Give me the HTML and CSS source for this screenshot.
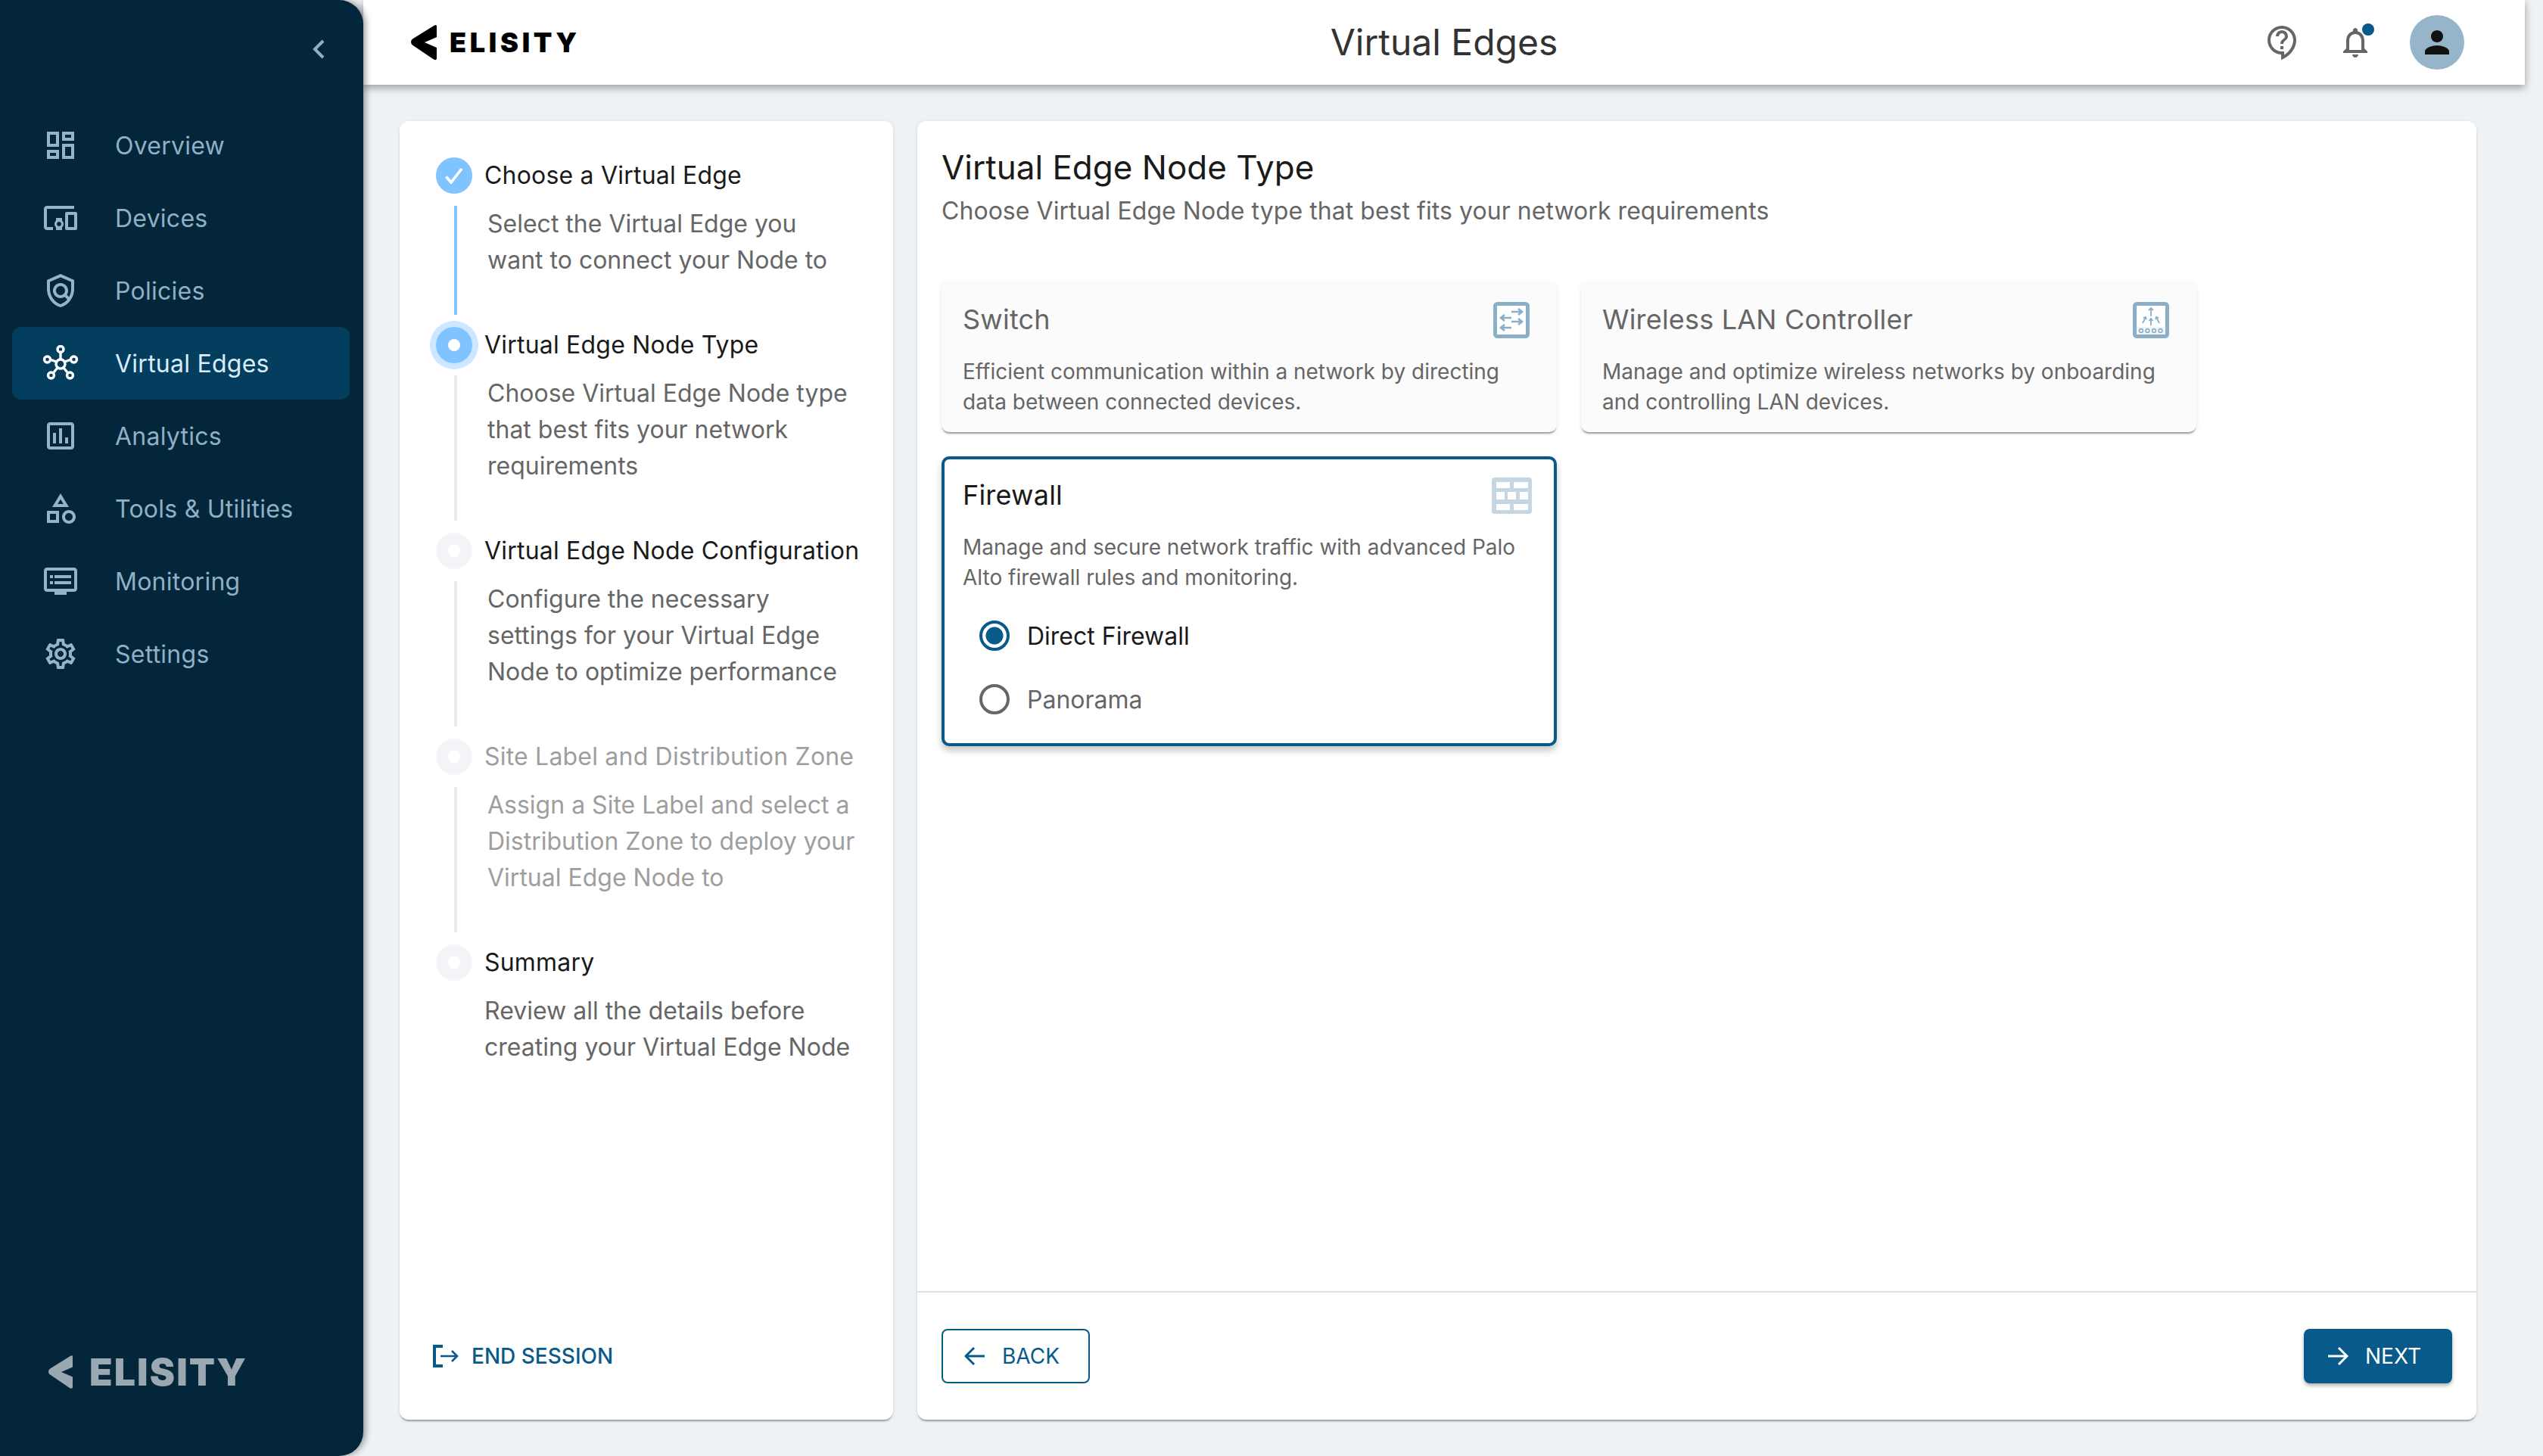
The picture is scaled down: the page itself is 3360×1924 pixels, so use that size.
FILE: index.html
```html
<!DOCTYPE html>
<html lang="en">
<head>
<meta charset="utf-8">
<title>Virtual Edges</title>
<link rel="stylesheet" href="styles.css">
</head>
<body>
<div class="app">
  <aside class="sidebar">
    <div class="collapse">
      <svg class="chevron" viewBox="0 0 18 26"><path d="M15 2 4 13l11 11"/></svg>
    </div>
    <nav class="nav">
      <a class="nav-item"><svg class="ico" viewBox="0 0 24 24"><path d="M19 5v2h-4V5h4M9 5v6H5V5h4m10 8v6h-4v-6h4M9 17v2H5v-2h4M21 3h-8v6h8V3zM11 3H3v10h8V3zm10 8h-8v10h8V11zm-10 4H3v6h8v-6z"/></svg><span>Overview</span></a>
      <a class="nav-item"><svg class="ico" viewBox="0 0 24 24"><path d="M3 6h18V4H3c-1.1 0-2 .9-2 2v12c0 1.1.9 2 2 2h4v-2H3V6zm10 6H9v1.78c-.61.55-1 1.33-1 2.22s.39 1.67 1 2.22V20h4v-1.78c.61-.55 1-1.34 1-2.22s-.39-1.67-1-2.22V12zm-2 5.5c-.83 0-1.5-.67-1.5-1.5s.67-1.5 1.5-1.5 1.5.67 1.5 1.5-.67 1.5-1.5 1.5zM22 8h-6c-.5 0-1 .5-1 1v10c0 .5.5 1 1 1h6c.5 0 1-.5 1-1V9c0-.5-.5-1-1-1zm-1 10h-4v-8h4v8z"/></svg><span>Devices</span></a>
      <a class="nav-item"><svg class="ico" viewBox="0 0 24 24"><path d="M12 1 3 5v6c0 5.55 3.84 10.74 9 12 5.16-1.26 9-6.45 9-12V5l-9-4zm7 10c0 1.85-.51 3.65-1.38 5.21l-1.45-1.45c1.29-1.94 1.07-4.58-.64-6.29-1.95-1.95-5.12-1.95-7.07 0-1.95 1.95-1.95 5.12 0 7.07 1.71 1.71 4.35 1.92 6.29.64l1.72 1.72c-1.19 1.44-2.73 2.51-4.47 3.04C7.98 19.69 5 15.52 5 11V6.3l7-3.11 7 3.11V11zm-7 4c-1.66 0-3-1.34-3-3s1.34-3 3-3 3 1.34 3 3-1.34 3-3 3z"/></svg><span>Policies</span></a>
      <a class="nav-item active"><svg class="ico hub" viewBox="0 0 48 48"><path d="M24 18V10M18.500 22 10 19M29.500 22 38 19M20 30 15 36M28 30 33 36"/><circle cx="24" cy="25" r="6"/><circle cx="24" cy="5.500" r="4"/><circle cx="6.500" cy="19" r="4"/><circle cx="41.500" cy="19" r="4"/><circle cx="11.500" cy="40" r="4"/><circle cx="36.500" cy="40" r="4"/></svg><span>Virtual Edges</span></a>
      <a class="nav-item"><svg class="ico" viewBox="0 0 24 24"><path d="M19 3H5c-1.1 0-2 .9-2 2v14c0 1.1.9 2 2 2h14c1.1 0 2-.9 2-2V5c0-1.1-.9-2-2-2zm0 16H5V5h14v14zM7 10h2v7H7zm4-3h2v10h-2zm4 6h2v4h-2z"/></svg><span>Analytics</span></a>
      <a class="nav-item"><svg class="ico" viewBox="0 0 24 24"><path d="m12 2-5.500 9h11L12 2zm0 3.840L13.930 9h-3.870L12 5.840zM17.500 13c-2.490 0-4.500 2.010-4.500 4.500s2.010 4.500 4.500 4.500 4.500-2.010 4.500-4.500-2.010-4.500-4.500-4.500zm0 7c-1.380 0-2.500-1.120-2.500-2.500s1.120-2.500 2.500-2.500 2.500 1.120 2.500 2.500-1.120 2.500-2.500 2.500zM3 21.500h8v-8H3v8zm2-6h4v4H5v-4z"/></svg><span>Tools &amp; Utilities</span></a>
      <a class="nav-item"><svg class="ico" viewBox="0 0 24 24"><path d="M21 3H3c-1.100 0-2 .9-2 2v12c0 1.100.9 2 2 2h5v2h8v-2h5c1.100 0 1.990-.9 1.990-2L23 5c0-1.100-.9-2-2-2zm0 14H3V5h18v12zm-2-9H8v2h11V8zm0 4H8v2h11v-2zM7 8H5v2h2V8zm0 4H5v2h2v-2z"/></svg><span>Monitoring</span></a>
      <a class="nav-item"><svg class="ico" viewBox="0 0 24 24"><path d="M19.430 12.980c.04-.32.07-.64.07-.98 0-.34-.03-.66-.07-.98l2.110-1.650c.19-.15.24-.42.12-.64l-2-3.460c-.09-.16-.26-.25-.44-.25-.06 0-.12.01-.17.03l-2.490 1c-.52-.4-1.080-.73-1.690-.98l-.38-2.650C14.460 2.180 14.250 2 14 2h-4c-.25 0-.46.18-.49.42l-.38 2.650c-.61.25-1.170.59-1.690.98l-2.490-1c-.06-.02-.12-.03-.18-.03-.17 0-.34.09-.43.25l-2 3.460c-.13.22-.07.49.12.64l2.110 1.650c-.04.32-.07.65-.07.98 0 .33.03.66.07.98l-2.110 1.650c-.19.15-.24.42-.12.64l2 3.460c.09.16.26.25.44.25.06 0 .12-.01.17-.03l2.490-1c.52.4 1.080.73 1.690.98l.38 2.650c.03.24.24.42.49.42h4c.25 0 .46-.18.49-.42l.38-2.650c.61-.25 1.170-.59 1.690-.98l2.490 1c.06.02.12.03.18.03.17 0 .34-.09.43-.25l2-3.460c.12-.22.07-.49-.12-.64l-2.110-1.650zm-1.980-1.710c.04.31.05.52.05.73 0 .21-.02.43-.05.73l-.14 1.130.89.7 1.080.84-.7 1.210-1.270-.51-1.040-.42-.9.68c-.43.32-.84.56-1.250.73l-1.060.43-.16 1.130-.2 1.350h-1.400l-.19-1.350-.16-1.130-1.060-.43c-.43-.18-.83-.41-1.230-.71l-.91-.7-1.060.43-1.270.51-.7-1.210 1.080-.84.89-.7-.14-1.130c-.03-.31-.05-.54-.05-.74s.02-.43.05-.73l.14-1.130-.89-.7-1.080-.84.7-1.210 1.270.51 1.040.42.9-.68c.43-.32.84-.56 1.250-.73l1.060-.43.16-1.130.2-1.350h1.390l.19 1.350.16 1.130 1.060.43c.43.18.83.41 1.230.71l.91.7 1.060-.43 1.270-.51.7 1.210-1.070.85-.89.7.14 1.130zM12 8c-2.210 0-4 1.790-4 4s1.790 4 4 4 4-1.790 4-4-1.790-4-4-4zm0 6c-1.100 0-2-.9-2-2s.9-2 2-2 2 .9 2 2-.9 2-2 2z"/></svg><span>Settings</span></a>
    </nav>
    <div class="side-brand">
      <svg class="side-mark" viewBox="0 0 34 48"><path d="M34 2.500Q34 0 31 1.500L2 19.500Q0 21 0 23.500 0 26 2 27.500L30 46.500Q34 48.500 34 45V31L18 24 34 17Z"/></svg>
      <span class="side-word">ELISITY</span>
    </div>
  </aside>

  <div class="main">
    <header class="topbar">
      <div class="top-left">
        <svg class="top-mark" viewBox="0 0 34 48"><path d="M34 2.500Q34 0 31 1.500L2 19.500Q0 21 0 23.500 0 26 2 27.500L30 46.500Q34 48.500 34 45V31L18 24 34 17Z"/></svg>
        <span class="top-word">ELISITY</span>
      </div>
      <h1 class="page-title">Virtual Edges</h1>
      <div class="top-right">
        <svg class="top-ico" viewBox="0 0 24 24"><path d="M11 23.590v-3.600c-5.010-.26-9-4.420-9-9.490C2 5.260 6.260 1 11.500 1S21 5.260 21 10.500c0 4.950-3.440 9.930-8.570 12.400l-1.430.69zM11.500 3C7.360 3 4 6.360 4 10.500S7.360 18 11.500 18H13v2.300c3.640-2.300 6-6.080 6-9.800C19 6.360 15.640 3 11.500 3zm-1 11.500h2v2h-2zm2-1.500h-2c0-3.250 3-3 3-5 0-1.100-.9-2-2-2s-2 .9-2 2h-2c0-2.210 1.790-4 4-4s4 1.790 4 4c0 2.500-3 2.750-3 5z"/></svg>
        <div class="bell">
          <svg class="top-ico" viewBox="0 0 24 24"><path d="M12 22c1.100 0 2-.9 2-2h-4c0 1.100.9 2 2 2zm6-6v-5c0-3.070-1.630-5.640-4.500-6.320V4c0-.83-.67-1.500-1.500-1.500s-1.500.67-1.500 1.500v.68C7.640 5.360 6 7.920 6 11v5l-2 2v1h16v-1l-2-2zm-2 1H8v-6c0-2.480 1.510-4.500 4-4.500s4 2.020 4 4.500v6z"/></svg>
          <span class="bell-dot"></span>
        </div>
        <div class="avatar"><svg class="avatar-ico" viewBox="0 0 24 24"><path d="M12 12c2.210 0 4-1.790 4-4s-1.790-4-4-4-4 1.790-4 4 1.790 4 4 4zm0 2c-2.670 0-8 1.340-8 4v2h16v-2c0-2.660-5.330-4-8-4z"/></svg></div>
      </div>
    </header>

    <div class="content">
      <section class="panel steps-panel">
        <ol class="steps">
          <li class="step">
            <div class="step-head"><span class="dot done"><svg class="check" viewBox="0 0 24 22"><path d="M1.500 12.500 8 20 22 2"/></svg></span><span class="step-title">Choose a Virtual Edge</span></div>
            <p class="step-body line-done">Select the Virtual Edge you want to connect your Node to</p>
          </li>
          <li class="step">
            <div class="step-head"><span class="dot current"><i></i></span><span class="step-title">Virtual Edge Node Type</span></div>
            <p class="step-body">Choose Virtual Edge Node type that best fits your network requirements</p>
          </li>
          <li class="step">
            <div class="step-head"><span class="dot"><i></i></span><span class="step-title">Virtual Edge Node Configuration</span></div>
            <p class="step-body">Configure the necessary settings for your Virtual Edge Node to optimize performance</p>
          </li>
          <li class="step muted">
            <div class="step-head"><span class="dot"><i></i></span><span class="step-title">Site Label and Distribution Zone</span></div>
            <p class="step-body">Assign a Site Label and select a Distribution Zone to deploy your Virtual Edge Node to</p>
          </li>
          <li class="step">
            <div class="step-head"><span class="dot"><i></i></span><span class="step-title">Summary</span></div>
            <p class="step-body last">Review all the details before creating your Virtual Edge Node</p>
          </li>
        </ol>
        <a class="end-session">
          <svg class="end-ico" viewBox="0 0 36 30"><path class="bracket" d="M14 2H3v26h11"/><path class="arrow-line" d="M11 15h22M26 8l7 7-7 7"/></svg>
          <span>END SESSION</span>
        </a>
      </section>

      <section class="panel node-panel">
        <div class="node-body">
          <h2 class="node-title">Virtual Edge Node Type</h2>
          <p class="node-sub">Choose Virtual Edge Node type that best fits your network requirements</p>
          <div class="cards">
            <article class="card">
              <div class="card-head"><h3>Switch</h3>
                <span class="card-ico"><svg class="ci-48" viewBox="0 0 48 48"><rect class="frame" x="2.500" y="2.500" width="43" height="43" rx="3"/><path class="arr" d="M24 13h14M33 9l5 4-5 4M24 21H10M15 17l-5 4 5 4M24 26h14M33 22l5 4-5 4M24 34H10M15 30l-5 4 5 4"/></svg></span>
              </div>
              <p class="card-desc">Efficient communication within a network by directing data between connected devices.</p>
            </article>
            <article class="card">
              <div class="card-head"><h3>Wireless LAN Controller</h3>
                <span class="card-ico"><svg class="ci-48" viewBox="0 0 48 48"><rect class="frame" x="2.500" y="2.500" width="43" height="43" rx="3"/><path class="arr thin" d="M24 8v11M21 11l3-3 3 3M24 22v9M21.500 25l2.500-3 2.500 3M13 28l4-8M14 21l3-1 1 3M35 28l-4-8M34 21l-3-1-1 3"/><rect class="band" x="5" y="33" width="38" height="10"/><circle class="bolt" cx="11" cy="38" r="2.400"/><circle class="bolt" cx="19.500" cy="38" r="2.400"/><circle class="bolt" cx="28" cy="38" r="2.400"/><circle class="bolt" cx="36.500" cy="38" r="2.400"/></svg></span>
              </div>
              <p class="card-desc">Manage and optimize wireless networks by onboarding and controlling LAN devices.</p>
            </article>
            <article class="card selected">
              <div class="card-head"><h3>Firewall</h3>
                <span class="card-ico"><svg class="ci-53" viewBox="0 0 53 48"><path class="wall" fill-rule="evenodd" d="M4 0H49Q53 0 53 4V44Q53 48 49 48H4Q0 48 0 44V4Q0 0 4 0ZM6 6V14H24V6ZM29 6V14H48V6ZM6 19V29H17V19ZM21 19V29H32V19ZM37 19V29H48V19ZM6 35V43H24V35ZM29 35V43H48V35Z"/></svg></span>
              </div>
              <p class="card-desc">Manage and secure network traffic with advanced Palo Alto firewall rules and monitoring.</p>
              <div class="radios">
                <label class="radio on"><span class="radio-mark"></span><span>Direct Firewall</span></label>
                <label class="radio"><span class="radio-mark"></span><span>Panorama</span></label>
              </div>
            </article>
          </div>
        </div>
        <footer class="node-foot">
          <button class="btn btn-back"><svg class="btn-ico" viewBox="0 0 28 26"><path d="M27 13H2M13 2 2 13l11 11"/></svg>BACK</button>
          <button class="btn btn-next"><svg class="btn-ico" viewBox="0 0 28 26"><path d="M1 13h25M15 2l11 11-11 11"/></svg>NEXT</button>
        </footer>
      </section>
    </div>
  </div>
</div>
</body>
</html>
```
FILE: styles.css
```css
* { box-sizing: border-box; }
html, body { margin: 0; padding: 0; }
body {
  width: 3360px;
  height: 1924px;
  overflow: hidden;
  background: #eef2f5;
  font-family: "Inter", "Liberation Sans", sans-serif;
  color: #1a1a1a;
}
h1, h2, h3, p, ol { margin: 0; padding: 0; font-weight: 400; }
ol { list-style: none; }

.app { display: flex; width: 3360px; height: 1924px; }

/* sidebar */
.sidebar {
  position: relative;
  z-index: 3;
  flex: 0 0 480px;
  display: flex;
  flex-direction: column;
  background: #03263a;
  border-radius: 0 32px 32px 0;
  box-shadow: 3px 0 8px rgba(0, 0, 0, .4);
}
.collapse { height: 144px; display: flex; justify-content: flex-end; padding: 52px 50px 0 0; }
.chevron { width: 18px; height: 26px; fill: none; stroke: #8fb0c6; stroke-width: 4; }
.nav { display: flex; flex-direction: column; }
.nav-item {
  display: flex;
  align-items: center;
  gap: 48px;
  width: 446px;
  height: 96px;
  margin-left: 16px;
  padding-left: 40px;
  border-radius: 12px;
  color: #8fb0c6;
  font-size: 32px;
  letter-spacing: .25px;
}
.ico { width: 48px; height: 48px; fill: #94b4c9; flex: none; }
.nav-item.active { background: #043e5f; color: #d9ecf9; }
.hub { fill: none; stroke: #fff; stroke-width: 3.4; }
.side-brand { display: flex; align-items: center; gap: 22px; margin-top: auto; padding: 0 0 87px 64px; }
.side-mark { width: 32px; height: 48px; fill: #9aa8b2; flex: none; }
.side-word { font-size: 50px; line-height: 48px; font-weight: 900; letter-spacing: 2.1px; color: #9aa8b2; }

/* header */
.main { flex: 1; display: flex; flex-direction: column; min-width: 0; }
.topbar {
  position: relative;
  z-index: 2;
  width: 2856px;
  height: 112px;
  flex: none;
  display: flex;
  align-items: center;
  background: #fff;
  box-shadow: 0 4px 10px rgba(0, 0, 0, .35);
}
.top-left { flex: 1 1 0; display: flex; align-items: center; gap: 17px; }
.top-mark { width: 34px; height: 48px; fill: #000; flex: none; margin-left: 63px; }
.top-word { font-size: 36px; line-height: 48px; font-weight: 900; letter-spacing: 4.7px; color: #000; }
.page-title { font-size: 48px; line-height: 56px; color: #333; white-space: nowrap; }
.top-right { flex: 1 1 0; display: flex; align-items: center; justify-content: flex-end; gap: 48px; }
.top-ico { width: 48px; height: 48px; fill: #666; display: block; }
.bell { position: relative; }
.bell-dot { position: absolute; left: 33px; top: -1px; width: 16px; height: 16px; border-radius: 50%; background: #075a8a; }
.avatar { width: 72px; height: 72px; margin-right: 80px; border-radius: 50%; background: #96b5c8; display: flex; align-items: center; justify-content: center; }
.avatar-ico { width: 48px; height: 48px; fill: #111; }

/* content */
.content { flex: 1; display: flex; gap: 32px; padding: 48px 88px 48px 48px; min-height: 0; }
.panel {
  background: #fff;
  border-radius: 12px;
  box-shadow: 0 3px 2px -1px rgba(0, 0, 0, .3), 0 1px 5px rgba(0, 0, 0, .1);
}
.steps-panel { flex: 0 0 652px; display: flex; flex-direction: column; padding: 48px 0 48px 48px; }
.step-head { display: flex; align-items: center; gap: 16px; height: 48px; }
.dot {
  flex: none;
  width: 48px;
  height: 48px;
  border-radius: 50%;
  background: #f2f4f8;
  display: flex;
  align-items: center;
  justify-content: center;
}
.dot i { width: 16px; height: 16px; border-radius: 50%; background: #fff; }
.dot.done, .dot.current { background: #80c4ff; }
.dot.current { box-shadow: 0 0 0 8px #cce7ff; }
.check { width: 24px; height: 22px; fill: none; stroke: #fff; stroke-width: 3.6; }
.step-title { font-size: 32px; line-height: 48px; white-space: nowrap; letter-spacing: .2px; }
.step-body {
  margin: 16px 0 16px 24px;
  padding: 0 46px 48px 40px;
  border-left: 4px solid #e8eaef;
  font-size: 32px;
  line-height: 48px;
  color: #666;
}
.step-body.line-done { border-left-color: #80c4ff; }
.step-body.last { border-left: 0; padding: 0 16px 0 40px; margin-bottom: 0; }
.step.muted .step-title, .step.muted .step-body { color: #9e9e9e; }
.end-session {
  display: flex;
  align-items: center;
  gap: 16px;
  height: 72px;
  margin: auto 0 0 -5px;
  color: #075a8a;
  font-size: 28px;
  font-weight: 500;
}
.end-ico { width: 36px; height: 30px; fill: none; flex: none; }
.bracket { stroke: #075a8a; stroke-width: 4; }
.arrow-line { stroke: #075a8a; stroke-width: 2.6; }

.node-panel { flex: 0 0 2060px; display: flex; flex-direction: column; }
.node-body { flex: 1; padding: 31px 32px 0; }
.node-title { font-size: 44px; line-height: 60px; color: #1a1a1a; }
.node-sub { margin-top: 4px; font-size: 32px; line-height: 48px; color: #666; letter-spacing: .05px; }
.cards { display: grid; grid-template-columns: repeat(2, 813px); gap: 32px; align-items: start; margin-top: 68px; }
.card {
  border: 4px solid transparent;
  border-radius: 10px;
  background: #fbfbfb;
  padding: 24px 24px 16px;
  min-height: 200px;
  box-shadow: 0 3px 2px -1px rgba(0, 0, 0, .35), 0 2px 6px rgba(0, 0, 0, .08);
}
.card-head { display: flex; align-items: center; justify-content: space-between; height: 48px; }
.card h3 { font-size: 36px; line-height: 48px; margin-top: -2px; color: #666; letter-spacing: .2px; }
.card-ico { width: 64px; height: 48px; display: flex; justify-content: center; }
.ci-48 { width: 48px; height: 48px; flex: none; }
.ci-53 { width: 53px; height: 48px; flex: none; }
.frame { fill: #fff; stroke: #8bafc7; stroke-width: 5; }
.arr { fill: none; stroke: #8bafc7; stroke-width: 2.6; }
.arr.thin { stroke-width: 1.8; }
.band { fill: #8bafc7; opacity: .12; }
.bolt { fill: #fff; stroke: #8bafc7; stroke-width: 1.6; }
.wall { fill: #c5d6e3; }
.card-desc { margin-top: 24px; font-size: 28px; line-height: 40px; color: #666; }
.card.selected { background: #fff; border-color: #075a8a; grid-column: 1; box-shadow: 0 6px 10px rgba(0, 0, 0, .22); }
.card.selected h3 { color: #1a1a1a; }
.radios { margin-top: 15px; display: flex; flex-direction: column; }
.radio { display: flex; align-items: center; gap: 23px; height: 84px; padding-left: 22px; font-size: 32px; color: #666; }
.radio.on { color: #1a1a1a; }
.radio-mark { width: 40px; height: 40px; border-radius: 50%; border: 4px solid #666; background: #fff; flex: none; }
.radio.on .radio-mark { border-color: #075a8a; background: radial-gradient(circle, #075a8a 0 11px, #fff 12px); }

.node-foot {
  flex: none;
  display: flex;
  justify-content: space-between;
  padding: 48px 32px;
  border-top: 2px solid #e0e0e0;
}
.btn {
  display: flex;
  align-items: center;
  justify-content: center;
  gap: 22px;
  width: 196px;
  height: 72px;
  padding: 0 10px 0 0;
  border-radius: 8px;
  font-family: inherit;
  font-size: 28px;
  font-weight: 400;
}
.btn-ico { width: 28px; height: 26px; fill: none; stroke-width: 3; flex: none; }
.btn-back { background: #fff; color: #075a8a; border: 2px solid #075a8a; }
.btn-back .btn-ico { stroke: #075a8a; }
.btn-next { background: #075a8a; color: #fff; border: 0; box-shadow: 0 3px 5px rgba(0, 0, 0, .3); }
.btn-next .btn-ico { stroke: #fff; }
```
